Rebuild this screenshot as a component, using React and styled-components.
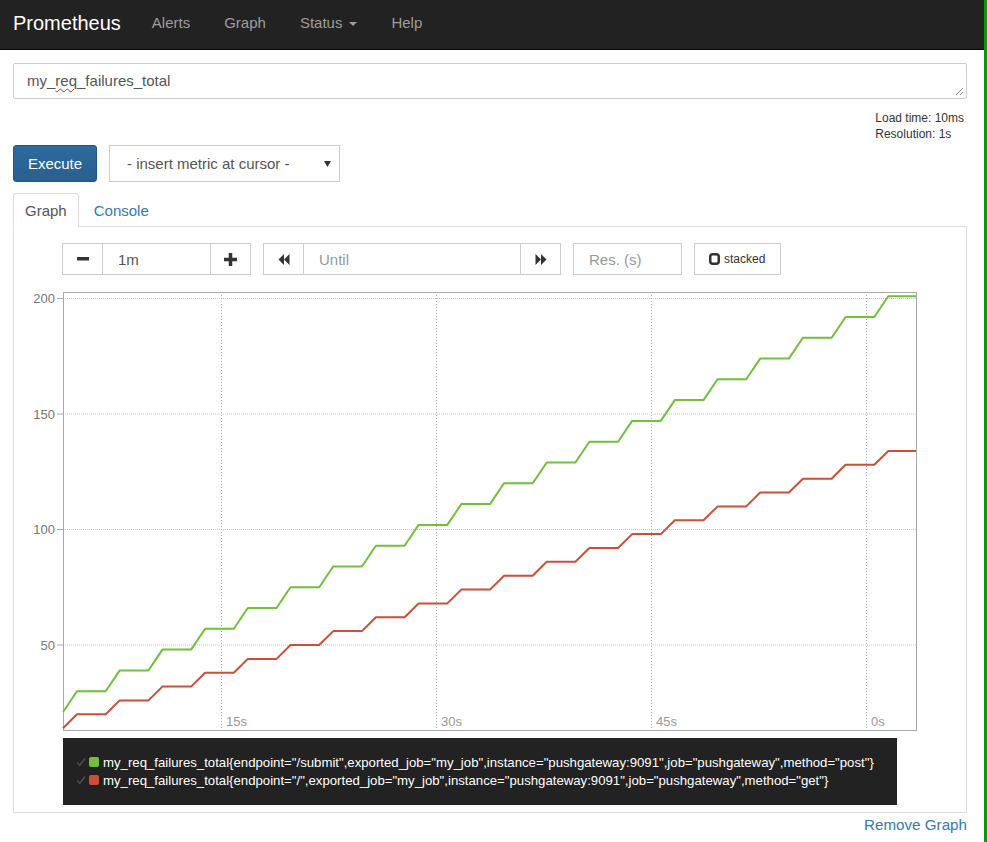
import React from "react";
import styled, { createGlobalStyle } from "styled-components";

const GlobalStyle = createGlobalStyle`
  html, body { margin: 0; padding: 0; background: #fff; }
  body {
    font-family: "Liberation Sans", Arial, Helvetica, sans-serif;
    font-size: 15px;
    color: #333;
  }
  * { box-sizing: border-box; }
`;

const Page = styled.div`
  width: 987px;
  min-height: 842px;
  border-right: 3px solid #17901a;
`;

const Navbar = styled.nav`
  display: flex;
  align-items: center;
  height: 50px;
  padding-bottom: 3px;
  background: #222;
  border-bottom: 1px solid #080808;
`;

const Brand = styled.a`
  padding-left: 13px;
  margin-right: 14px;
  font-size: 20px;
  color: #fff;
  text-decoration: none;
  line-height: 24px;
`;

const NavLink = styled.a`
  display: flex;
  align-items: center;
  padding: 0 17px;
  font-size: 15px;
  color: #9d9d9d;
  text-decoration: none;
  line-height: 24px;
`;

const Caret = styled.span`
  display: inline-block;
  margin-left: 7px;
  margin-top: 2px;
  width: 0;
  height: 0;
  border-top: 4px solid #9d9d9d;
  border-left: 4px solid transparent;
  border-right: 4px solid transparent;
`;

const Content = styled.div`
  padding: 13px 17px 0 13px;
`;

const QueryBox = styled.div`
  position: relative;
  height: 36px;
  border: 1px solid #ccc;
  border-radius: 2px;
  padding: 0 13px;
  line-height: 34px;
  font-size: 15px;
  color: #555;
`;

const Misspelled = styled.span`
  text-decoration: underline wavy #e02020;
  text-decoration-thickness: 1px;
  text-underline-offset: 2px;
`;

const Grip = styled.svg`
  position: absolute;
  right: 2px;
  bottom: 2px;
`;

const Meta = styled.div`
  display: flex;
  justify-content: flex-end;
  margin-top: 11px;
`;

const MetaBlock = styled.div`
  margin-right: 3px;
  font-size: 12px;
  line-height: 16px;
  color: #333;
`;

const ToolRow = styled.div`
  display: flex;
  gap: 12px;
  margin-top: 3px;
`;

const ExecuteButton = styled.button`
  width: 84px;
  height: 37px;
  padding: 0;
  border: 1px solid #245580;
  border-radius: 3px;
  background: linear-gradient(#2d6a9e, #28608f);
  color: #fff;
  font-family: inherit;
  font-size: 15px;
`;

const MetricSelect = styled.div`
  display: flex;
  align-items: center;
  justify-content: space-between;
  width: 231px;
  height: 37px;
  border: 1px solid #ccc;
  padding: 0 8px 0 17px;
  font-size: 15px;
  color: #555;
`;

const TabList = styled.div`
  display: flex;
  margin-top: 11px;
  border-bottom: 1px solid #ddd;
  height: 34px;
`;

const Tab = styled.a`
  display: flex;
  align-items: center;
  height: 35px;
  padding: 0 ${(p) => (p.$active ? "11px" : "14px")};
  border: 1px solid ${(p) => (p.$active ? "#ddd" : "transparent")};
  border-bottom-color: transparent;
  border-radius: 3px 3px 0 0;
  background: ${(p) => (p.$active ? "#fff" : "transparent")};
  color: ${(p) => (p.$active ? "#555" : "#337ab7")};
  font-size: 15px;
  text-decoration: none;
`;

const Panel = styled.div`
  border: 1px solid #ddd;
  border-top: none;
  padding: 16px 0 7px 0;
`;

const Controls = styled.div`
  display: flex;
  gap: 12px;
  padding-left: 48px;
`;

const Group = styled.div`
  display: flex;
`;

const AddonButton = styled.button`
  display: flex;
  align-items: center;
  justify-content: center;
  width: 41px;
  height: 32px;
  padding: 0;
  border: 1px solid #ccc;
  background: #fff;
  margin-left: ${(p) => (p.$join ? "-1px" : "0")};
`;

const TextField = styled.div`
  display: flex;
  align-items: center;
  width: ${(p) => p.$w}px;
  height: 32px;
  padding: 0 15px;
  border: 1px solid #ccc;
  margin-left: ${(p) => (p.$join ? "-1px" : "0")};
  font-size: 15px;
  color: ${(p) => (p.$placeholder ? "#999" : "#555")};
`;

const StackedButton = styled.button`
  display: flex;
  align-items: center;
  gap: 4px;
  width: 87px;
  height: 32px;
  padding: 0 0 0 14px;
  border: 1px solid #ccc;
  background: #fff;
  font-family: inherit;
  font-size: 12px;
  color: #333;
`;

const ChartSvg = styled.svg`
  display: block;
  margin-top: 9px;
`;

const Legend = styled.div`
  width: 834px;
  margin: 4px 0 0 49px;
  background: #222;
  padding: 15px 0 16px 13px;
`;

const LegendRow = styled.div`
  display: flex;
  align-items: center;
  height: 18px;
  font-size: 13.2px;
  color: #fff;
  white-space: nowrap;
`;

const Swatch = styled.span`
  display: inline-block;
  width: 10px;
  height: 10px;
  border-radius: 2px;
  margin: 0 4px 0 3px;
  background: ${(p) => p.$color};
`;

const Footer = styled.div`
  display: flex;
  justify-content: flex-end;
  margin-top: 2px;
`;

const RemoveLink = styled.a`
  font-size: 15.2px;
  line-height: 20px;
  color: #337ab7;
  text-decoration: none;
`;

const GREEN = "#72bf3b";
const RED = "#cc4f38";

const yOf = (v) => 646 - (v - 50) * 2.31;

function stepPoints(start, inc) {
  const pts = [];
  const p = 42.7;
  for (let k = 0; k < 20; k++) {
    const x0 = 63 + k * p;
    const x1 = x0 + 14;
    pts.push([x0, yOf(start + k * inc)]);
    pts.push([x1, yOf(start + (k + 1) * inc)]);
  }
  pts.push([916, yOf(start + 20 * inc)]);
  return pts.map(([x, y]) => `${x.toFixed(1)},${y.toFixed(1)}`).join(" ");
}

function Chart() {
  const yTicks = [50, 100, 150, 200];
  const xTicks = [
    [221, "15s"],
    [436, "30s"],
    [651, "45s"],
    [866, "0s"],
  ];
  return (
    <ChartSvg width="910" height="450" viewBox="14 285 910 450">
      {yTicks.map((v) => (
        <g key={v}>
          <line
            x1="63"
            x2="916"
            y1={yOf(v)}
            y2={yOf(v)}
            stroke="#c8c8c8"
            strokeDasharray="1 1"
          />
          <line x1="57" x2="63" y1={yOf(v)} y2={yOf(v)} stroke="#aaa" />
          <text
            x="55"
            y={yOf(v) + 4.5}
            textAnchor="end"
            fontSize="13"
            fill="#777"
            fontFamily="Liberation Sans, Arial, sans-serif"
          >
            {v}
          </text>
        </g>
      ))}
      {xTicks.map(([x, l]) => (
        <g key={l}>
          <line
            x1={x + 0.5}
            x2={x + 0.5}
            y1="293"
            y2="731"
            stroke="#b0b0b0"
            strokeDasharray="1 2"
          />
          <text
            x={x + 5}
            y="727"
            fontSize="13"
            fill="#999"
            fontFamily="Liberation Sans, Arial, sans-serif"
          >
            {l}
          </text>
        </g>
      ))}
      <rect
        x="63.5"
        y="293.5"
        width="853"
        height="438"
        fill="none"
        stroke="#aaa"
      />
      <polyline
        points={stepPoints(21, 9)}
        fill="none"
        stroke={GREEN}
        strokeWidth="2"
        strokeLinejoin="round"
      />
      <polyline
        points={stepPoints(14, 6)}
        fill="none"
        stroke={RED}
        strokeWidth="2"
        strokeLinejoin="round"
      />
    </ChartSvg>
  );
}

const Check = () => (
  <svg width="10" height="10" viewBox="0 0 10 10">
    <path d="M1 5.5 L3.8 8.2 L9 1.5" fill="none" stroke="#4a4a4a" strokeWidth="1.6" />
  </svg>
);

export default function App() {
  return (
    <>
      <GlobalStyle />
      <Page>
        <Navbar>
          <Brand>Prometheus</Brand>
          <NavLink>Alerts</NavLink>
          <NavLink>Graph</NavLink>
          <NavLink>
            Status
            <Caret />
          </NavLink>
          <NavLink>Help</NavLink>
        </Navbar>
        <Content>
          <QueryBox>
            my_<Misspelled>req</Misspelled>_failures_total
            <Grip width="9" height="9" viewBox="0 0 9 9">
              <path d="M8 1 L1 8 M8 5 L5 8" stroke="#888" strokeWidth="1" />
            </Grip>
          </QueryBox>
          <Meta>
            <MetaBlock>
              Load time: 10ms
              <br />
              Resolution: 1s
            </MetaBlock>
          </Meta>
          <ToolRow>
            <ExecuteButton>Execute</ExecuteButton>
            <MetricSelect>
              <span>- insert metric at cursor -</span>
              <svg width="7" height="6" viewBox="0 0 7 6">
                <path d="M0 0 H7 L3.5 6 Z" fill="#333" />
              </svg>
            </MetricSelect>
          </ToolRow>
          <TabList>
            <Tab $active>Graph</Tab>
            <Tab>Console</Tab>
          </TabList>
          <Panel>
            <Controls>
              <Group>
                <AddonButton>
                  <svg width="12" height="4" viewBox="0 0 12 4">
                    <rect x="0" y="0" width="12" height="3.5" fill="#333" />
                  </svg>
                </AddonButton>
                <TextField $w={109} $join>
                  1m
                </TextField>
                <AddonButton $join>
                  <svg width="13" height="13" viewBox="0 0 13 13">
                    <path d="M4.75 0 H8.25 V4.75 H13 V8.25 H8.25 V13 H4.75 V8.25 H0 V4.75 H4.75 Z" fill="#333" />
                  </svg>
                </AddonButton>
              </Group>
              <Group>
                <AddonButton>
                  <svg width="12" height="11" viewBox="0 0 12 11">
                    <path d="M6 0 L0.5 5.5 L6 11 Z M11.5 0 L6 5.5 L11.5 11 Z" fill="#333" />
                  </svg>
                </AddonButton>
                <TextField $w={218} $join $placeholder>
                  Until
                </TextField>
                <AddonButton $join>
                  <svg width="12" height="11" viewBox="0 0 12 11">
                    <path d="M0.5 0 L6 5.5 L0.5 11 Z M6 0 L11.5 5.5 L6 11 Z" fill="#333" />
                  </svg>
                </AddonButton>
              </Group>
              <TextField $w={109} $placeholder>
                Res. (s)
              </TextField>
              <StackedButton>
                <svg width="11" height="12" viewBox="0 0 11 12">
                  <rect x="1.25" y="1.25" width="8.5" height="9.5" rx="2.5" fill="none" stroke="#333" strokeWidth="2.5" />
                </svg>
                stacked
              </StackedButton>
            </Controls>
            <Chart />
            <Legend>
              <LegendRow>
                <Check />
                <Swatch $color={GREEN} />
                {'my_req_failures_total{endpoint="/submit",exported_job="my_job",instance="pushgateway:9091",job="pushgateway",method="post"}'}
              </LegendRow>
              <LegendRow>
                <Check />
                <Swatch $color={RED} />
                {'my_req_failures_total{endpoint="/",exported_job="my_job",instance="pushgateway:9091",job="pushgateway",method="get"}'}
              </LegendRow>
            </Legend>
          </Panel>
          <Footer>
            <RemoveLink>Remove Graph</RemoveLink>
          </Footer>
        </Content>
      </Page>
    </>
  );
}
